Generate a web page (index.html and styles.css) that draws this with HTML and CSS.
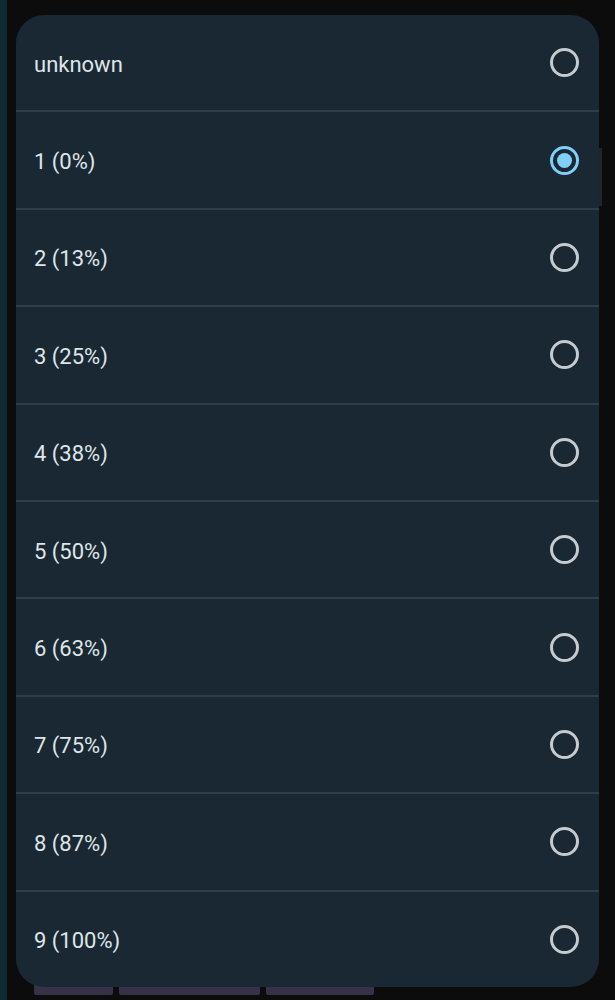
FILE: index.html
```html
<!DOCTYPE html>
<html>
<head>
<meta charset="utf-8">
<link rel="stylesheet" href="styles.css">
</head>
<body>
<div class="screen">
  <div class="backdrop">
    <div class="edge-left"></div>
    <div class="edge-right"></div>
    <div class="chips">
      <div class="chip chip-a"></div>
      <div class="chip chip-b"></div>
      <div class="chip chip-c"></div>
    </div>
  </div>
  <div class="dialog">
    <div class="row"><span class="label">unknown</span><span class="radio"></span></div>
    <div class="row"><span class="label">1 (0%)</span><span class="radio checked"></span></div>
    <div class="row"><span class="label">2 (13%)</span><span class="radio"></span></div>
    <div class="row"><span class="label">3 (25%)</span><span class="radio"></span></div>
    <div class="row"><span class="label">4 (38%)</span><span class="radio"></span></div>
    <div class="row"><span class="label">5 (50%)</span><span class="radio"></span></div>
    <div class="row"><span class="label">6 (63%)</span><span class="radio"></span></div>
    <div class="row"><span class="label">7 (75%)</span><span class="radio"></span></div>
    <div class="row"><span class="label">8 (87%)</span><span class="radio"></span></div>
    <div class="row last"><span class="label">9 (100%)</span><span class="radio"></span></div>
  </div>
</div>
</body>
</html>
```
FILE: styles.css
```css
html, body {
  margin: 0;
  padding: 0;
  background: #0c0c0c;
}
.screen {
  position: relative;
  width: 615px;
  height: 1000px;
  overflow: hidden;
  font-family: Roboto, "Noto Sans", sans-serif;
}
.backdrop {
  position: absolute;
  inset: 0;
}
.edge-left {
  position: absolute;
  left: 0;
  top: 0;
  width: 7px;
  height: 1000px;
  background: #0f2a30;
}
.edge-right {
  position: absolute;
  left: 598px;
  top: 148px;
  width: 4px;
  height: 58px;
  background: #1c262d;
}
.chips {
  position: absolute;
  left: 34px;
  top: 984px;
  display: flex;
  gap: 6px;
}
.chip {
  height: 11px;
  background: #37324a;
  border-radius: 0 0 2px 2px;
}
.chip-a { width: 79px; }
.chip-b { width: 141px; }
.chip-c { width: 108px; }
.dialog {
  position: absolute;
  left: 16px;
  top: 15px;
  width: 583px;
  background: #1a2833;
  border-radius: 28px;
  overflow: hidden;
}
.row {
  box-sizing: border-box;
  height: 97.4px;
  display: flex;
  align-items: center;
  justify-content: space-between;
  padding: 0 20px 0 18px;
  border-bottom: 2px solid #2f3e47;
}
.row.last {
  border-bottom: none;
  height: 95.4px;
}
.label {
  font-size: 22px;
  color: #dfe5e8;
  line-height: 1;
  padding-top: 4px;
}
.radio {
  box-sizing: border-box;
  width: 29px;
  height: 29px;
  border-radius: 50%;
  border: 3px solid #c5cbcf;
  display: flex;
  align-items: center;
  justify-content: center;
}
.radio.checked {
  border-color: #80cff8;
}
.radio.checked::after {
  content: "";
  width: 15px;
  height: 15px;
  border-radius: 50%;
  background: #80cff8;
}
```
